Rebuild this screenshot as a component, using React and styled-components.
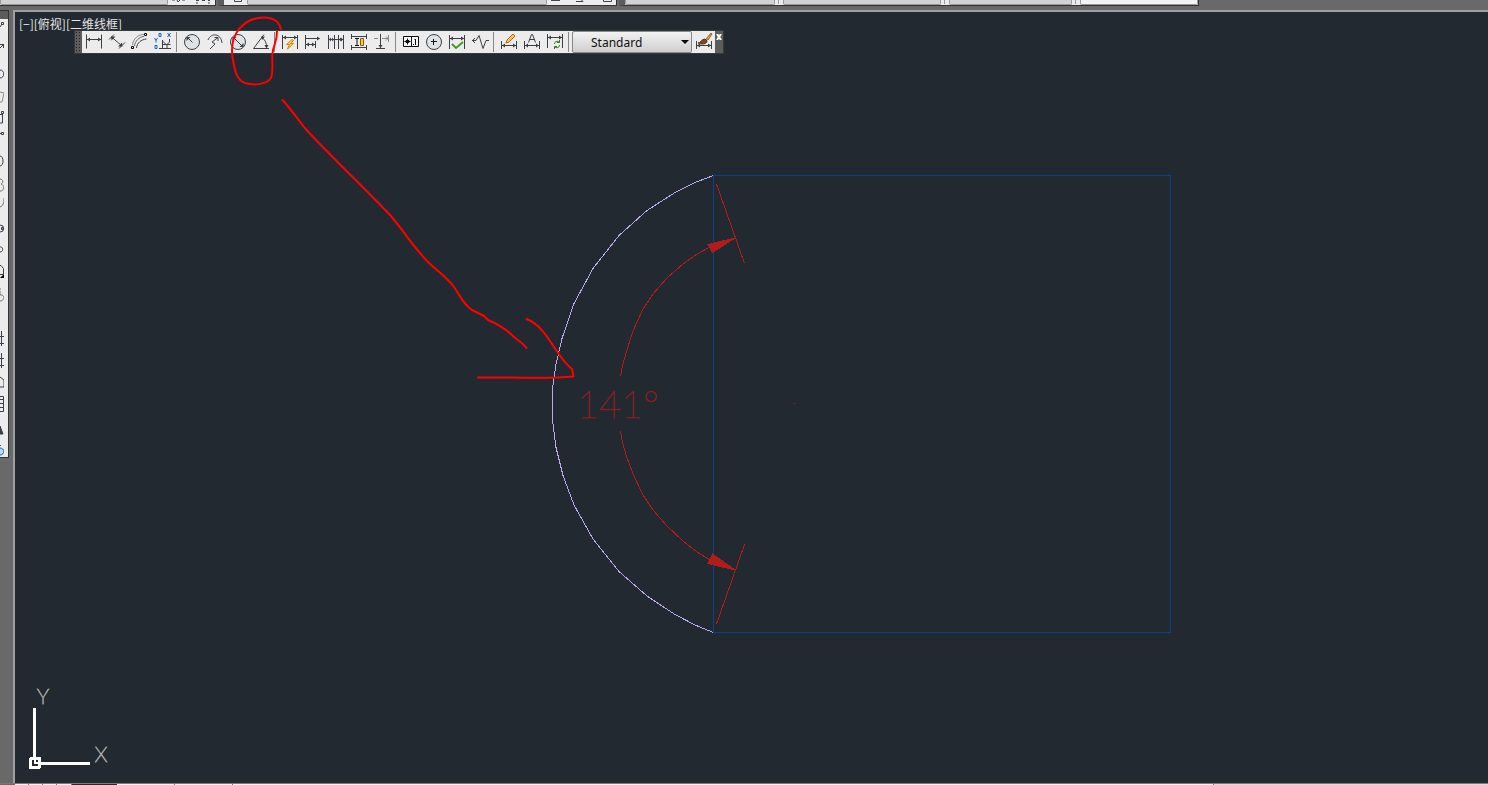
import styled, { createGlobalStyle } from "styled-components";

const ink = "#3c3f44";

const GlobalStyle = createGlobalStyle`
    * {
        box-sizing: border-box;
    }

    body {
        margin: 0;
        background-color: #696969;
        font-family: "Noto Sans CJK SC", "Noto Sans", sans-serif;
        overflow: hidden;
    }
`

const dimensionTools = [
    {
        group: "dimension",
        tools: [
            {
                label: "Linear",
                icon: (
                    <>
                        <path d="M1.500 1.500v14M16.500 1.500v14M2 6.500h14" />
                        <path d="M2 6.500l3-2v4zM16 6.500l-3-2v4z" fill={ink} stroke="none" />
                    </>
                )
            },
            {
                label: "Aligned",
                icon: (
                    <>
                        <path d="M1 6.500L6 1.500M11 15.500l6-6M3.500 4l10.500 9" />
                        <path d="M3 3.500h4.500L3.500 7.500zM14.500 13.500H10L14 9.500z" fill={ink} stroke="none" />
                    </>
                )
            },
            {
                label: "Arc length",
                icon: (
                    <>
                        <path d="M1.500 12C2 6 7 1.500 13 1.500" stroke="#888" />
                        <path d="M5.500 15C6 10 10 6.500 15.500 6" />
                        <path d="M3.500 13C4 8 8 4 13 3.500" stroke="#666" />
                        <path d="M.5 13.500h2v2h-2zM13.500.5h2v2h-2z" fill="#fff" stroke="#000" />
                    </>
                )
            },
            {
                label: "Ordinate",
                icon: (
                    <>
                        <path d="M8.500 7v9M5 15.500h12M9 11.500h4v4M8.500 8l3.500 3.500h4.500M15.500 6v3l-2.500 2.500" />
                        <path d="M5 .5h2v3H5zM1 12.500h2v3H1zM13.500 0l3 4M16.500 0l-3 4M.5 5L2 7.500M3.500 5L2 7.500v2" stroke="#1767b5" />
                    </>
                )
            }
        ]
    },
    {
        group: "radial",
        tools: [
            {
                label: "Radius",
                icon: (
                    <>
                        <circle cx="9" cy="9" r="7.500" fill="#dfe3e3" />
                        <path d="M9.500 9.500L5 5" />
                        <path d="M3.500 4h4l-4 4z" fill={ink} stroke="none" />
                    </>
                )
            },
            {
                label: "Jogged",
                icon: <path d="M2 7C5-.5 15 0 16 10M4 16l5-5-3-2 6-4.500M8.500 4.500H12V8" />
            },
            {
                label: "Diameter",
                icon: (
                    <>
                        <circle cx="9" cy="9" r="7.500" fill="#dfe3e3" />
                        <path d="M4 4l10 10" />
                        <path d="M3.500 4h4l-4 4zM14.500 14h-4l4-4z" fill={ink} stroke="none" />
                    </>
                )
            },
            {
                label: "Angular",
                icon: (
                    <>
                        <path d="M12 1.500L1.500 15.500H17M10 4.500c3 2 5 6 4.500 10" />
                        <path d="M9 3.500h4L10 7zM12.500 12h4l-2 3.500z" fill={ink} stroke="none" />
                    </>
                )
            }
        ]
    },
    {
        group: "placement",
        tools: [
            {
                label: "Quick dimension",
                icon: (
                    <>
                        <path d="M1.500 2v14M16.500 2v14M2 4.500h14" />
                        <path d="M2 4.500l3-2v4zM16 4.500l-3-2v4z" fill={ink} stroke="none" />
                        <path d="M11 6.500L5.500 11.500h3l-2 4.500 6-5.500h-3l3-3z" fill="#ffd34e" stroke="#e0800f" />
                    </>
                )
            },
            {
                label: "Baseline",
                icon: (
                    <>
                        <path d="M1.500 2v14M1.500 5.500h14M2 11.500h10M11.500 8v7" />
                        <path d="M16 5.500l-3-2v4zM2 11.500l3-2v4zM11 11.500l-3-2v4z" fill={ink} stroke="none" />
                    </>
                )
            },
            {
                label: "Continue",
                icon: (
                    <>
                        <path d="M1.500 2v14M7.500 2v14M11.500 2v14M16.500 2v14M2 6.500h14" />
                        <path d="M2 6.500l2-2v4zM7 6.500l-2-2v4zM12 6.500l2-2v4zM16 6.500l-2-2v4z" fill={ink} stroke="none" />
                    </>
                )
            },
            {
                label: "Dimension space",
                icon: (
                    <>
                        <path d="M1 3.500h16M1 14.500h16M1.500 1v5M16.500 1v5M1.500 12v5M16.500 12v5" />
                        <path d="M5 5.500h4M7 6v6M5 12.500h4" stroke="#111" />
                        <path d="M10.500 5.500h3v7h-3z" fill="#ffc928" stroke="#8c5a14" />
                    </>
                )
            },
            {
                label: "Dimension break",
                icon: (
                    <>
                        <path d="M1 5.500h4M9 5.500h7M15.500 2v7M13 3.500l2 2-2 2" stroke="#888" />
                        <path d="M7.500 1v14M3 15.500h9" />
                        <path d="M7.500 15l-2-3h4z" fill={ink} stroke="none" />
                    </>
                )
            }
        ]
    },
    {
        group: "marking",
        tools: [
            {
                label: "Tolerance",
                icon: (
                    <>
                        <path d="M1.500 3.500h15v10h-15zM9.500 3.500v10" fill="#fff" stroke="#111" />
                        <path d="M2.500 8.500h6M5.500 5.500v6M4 7.500h3v2H4zM13.500 6v6M12.500 6.500h1M11 11.500h1" stroke="#111" />
                    </>
                )
            },
            {
                label: "Center mark",
                icon: (
                    <>
                        <circle cx="9" cy="9" r="7.500" fill="#dfe3e3" />
                        <path d="M8.500 6v6M6 8.500h6" stroke="#111" />
                    </>
                )
            },
            {
                label: "Inspection",
                icon: (
                    <>
                        <path d="M1.500 2v14M16.500 2v14M2 5.500h14" />
                        <path d="M2 5.500l3-2v4zM16 5.500l-3-2v4z" fill={ink} stroke="none" />
                        <path d="M4 11l4 4 7-6" stroke="#38a020" strokeWidth="2" />
                    </>
                )
            },
            {
                label: "Jogged linear",
                icon: <path d="M1 7.500h4l3-5 4 13 3-8h3M4 5L1.500 7.500 4 10" />
            }
        ]
    },
    {
        group: "editing",
        tools: [
            {
                label: "Dimension edit",
                icon: (
                    <>
                        <path d="M1.500 8v8M16.500 8v8M2 12.500h14" />
                        <path d="M2 12.500l3-2v4zM16 12.500l-3-2v4z" fill={ink} stroke="none" />
                        <path d="M6 10l1-3 6-6 2 2-6 6z" fill="#ffc655" stroke="#b8651b" />
                    </>
                )
            },
            {
                label: "Dimension text edit",
                icon: (
                    <>
                        <path d="M1.500 8v8M16.500 8v8M2 12.500h14" />
                        <path d="M2 12.500l3-2v4zM16 12.500l-3-2v4z" fill={ink} stroke="none" />
                        <path d="M5.500 9.500l3-8h1l3 8M6.500 6.500h5" />
                    </>
                )
            },
            {
                label: "Dimension update",
                icon: (
                    <>
                        <path d="M1.500 1v14M16.500 1v14M2 4.500h14" />
                        <path d="M2 4.500l3-2v4zM16 4.500l-3-2v4z" fill={ink} stroke="none" />
                        <path d="M8.500 11c0-3 3-3 5-2M13.500 7v2.500H11M13.500 12c0 3-3 3-5 2M8.500 16v-2.500H11" stroke="#287a1c" />
                    </>
                )
            }
        ]
    }
]

// The docked draw palette is mostly off screen, only the right edge of each icon shows
const drawTools = [
    { label: "Line", height: 23, icon: <path d="M0 8l2-3M1.500 3.500h2v2h-2z" /> },
    { label: "Construction line", height: 20, icon: <path d="M0 6l4-4M0 2.500h3.500V6" /> },
    { label: "Polyline", height: 27, icon: <path d="M0 8c5 0 5 8 0 8" /> },
    { label: "Polygon", height: 20, icon: <path d="M0 3l4 1-2 9H0" stroke="#888" /> },
    { label: "Rectangle", height: 20, icon: <path d="M0 5.500h2M2.500 5v9H0M1.500 2.500h2v2h-2z" /> },
    { label: "Arc", height: 21, icon: <path d="M0 4.500h1M1.500 3.500h2v2h-2z" /> },
    { label: "Circle", height: 26, icon: <path d="M0 6c4 0 4 10 0 10" /> },
    { label: "Revision cloud", height: 19, icon: <path d="M0 3c3 0 4 4 1 5 4 1 3 8-1 7" stroke="#777" /> },
    { label: "Spline", height: 24, icon: <path d="M4 3c0 5-1 8-4 9" stroke="#777" /> },
    { label: "Ellipse", height: 21, icon: <path d="M0 6l3 1v5l-3 1M1.500 8.500h2v2h-2z" /> },
    { label: "Ellipse arc", height: 22, icon: <path d="M0 7c3-1 4 5 0 5" /> },
    {
        label: "Insert block",
        height: 24,
        icon: (
            <>
                <path d="M0 3.500h1l2.500 3v6H0" />
                <path d="M4 12v4H0z" fill="#000" stroke="none" />
            </>
        )
    },
    { label: "Make block", height: 45, icon: <path d="M0 5v4c5-1 5 6 0 6M0 3h1" stroke="#777" /> },
    { label: "Hatch", height: 22, icon: <path d="M1.500 0v15M0 5.500h4M0 12.500h4" /> },
    { label: "Gradient", height: 21, icon: <path d="M1.500 0v15M0 5.500h4M0 12.500h4" /> },
    { label: "Region", height: 22, icon: <path d="M0 3l4 3v7H0" /> },
    { label: "Table", height: 29, icon: <path d="M0 .5h3.500v15H0M0 3.500h3M0 7.500h3M0 11.500h3" /> },
    { label: "Multiline text", height: 20, icon: <path d="M0 1l3 8H0z" fill={ink} /> },
    { label: "Add selected", height: 12, icon: <path d="M0 3c5 0 5 7 0 7M0 .5h1" stroke="#1767b5" fill="#b8dcff" /> }
]

export default function App() {
    return (
        <>
            <GlobalStyle />
            <Window>
                <TopBar aria-label="Properties">
                    <Strip $width={216}>
                        <Combo $width={168} />
                        <Peek viewBox="0 0 44 5" width="44" height="5">
                            <path d="M4 0h3M9 0l1 2 2-2M14 0h3M28 .5h3M34 .5h3M40 .5h2M28 3h2M40 3h2" />
                        </Peek>
                    </Strip>
                    <Strip $width={399} $grip>
                        <Peek viewBox="0 0 23 5" width="23" height="5">
                            <path d="M10.500 0v1.500h7V0" />
                        </Peek>
                        <Combo $width={300} />
                        <Peek viewBox="0 0 68 5" width="68" height="5">
                            <path d="M4 .5h9M29 1.500h7l-2-2M56.500 0v1.500h8V0" />
                        </Peek>
                    </Strip>
                    <Strip $width={580} $grip>
                        <Combo $width={150} />
                        <Divider />
                        <Combo $width={158} />
                        <Divider />
                        <Combo $width={123} />
                        <Divider />
                        <Combo $light />
                    </Strip>
                </TopBar>
                <Workspace>
                    <DrawPalette aria-label="Draw">
                        <PaletteGrip />
                        {drawTools.map((tool) => (
                            <DrawButton key={tool.label} aria-label={tool.label} $height={tool.height}>
                                <Icon width="4" height="18" viewBox="0 0 4 18">{tool.icon}</Icon>
                            </DrawButton>
                        ))}
                    </DrawPalette>
                    <Viewport>
                        <ViewLabel>
                            <ViewButton>[−]</ViewButton>
                            <ViewButton>[俯视]</ViewButton>
                            <ViewButton>[二维线框]</ViewButton>
                        </ViewLabel>
                        <Drawing />
                        <DimensionBar />
                        <Markup />
                    </Viewport>
                </Workspace>
                <BottomBar>
                    <Tab $width={14} />
                    <Tab $width={14} />
                    <Tab $width={14} />
                    <Tab $width={15} />
                    <TabGap />
                    <Tab $width={58} />
                    <Tab $width={58} />
                    <Tab $grow />
                    <ScrollTrack />
                </BottomBar>
            </Window>
        </>
    )
}

const DimensionBar = () => (
    <FloatingBar role="toolbar" aria-label="Dimension">
        <Grip />
        {dimensionTools.map(({ group, tools }) => (
            <ToolGroup key={group}>
                {tools.map((tool) => (
                    <ToolButton key={tool.label} aria-label={tool.label}>
                        <Icon width="18" height="18" viewBox="0 0 18 18">{tool.icon}</Icon>
                    </ToolButton>
                ))}
            </ToolGroup>
        ))}
        <StyleField>
            <StyleSelect aria-label="Dimension style" defaultValue="Standard">
                <option>Standard</option>
            </StyleSelect>
            <Caret width="8" height="4" viewBox="0 0 8 4">
                <path d="M0 0h8L4 4z" />
            </Caret>
        </StyleField>
        <ToolButton aria-label="Dimension style manager">
            <Icon width="18" height="18" viewBox="0 0 18 18">
                <path d="M1.500 8v8M16.500 8v8M2 12.500h14" />
                <path d="M2 12.500l3-2v4zM16 12.500l-3-2v4z" fill={ink} stroke="none" />
                <path d="M3 10c3 0 3-4 7-4l2 2c0 3-5 4-9 2z" fill="#7a4a24" stroke="#5b3517" />
                <path d="M11 6l5-6 1 1-4 6z" fill="#d99a4a" stroke="#a06a2c" />
            </Icon>
        </ToolButton>
        <CloseButton aria-label="Close">
            <svg width="6" height="6" viewBox="0 0 6 6">
                <path d="M1 0l4 6M5 0L1 6" stroke="#fff" strokeWidth="2" />
            </svg>
        </CloseButton>
    </FloatingBar>
)

const Drawing = () => (
    <Sheet viewBox="15 12 1473 771" width="1473" height="771" shapeRendering="crispEdges">
        <path d="M713.500 175.500H1170.500V632.500H713.500z" stroke="#0b3f86" />
        <path
            d="M713.500 175.500L695 182.500 675 192.500 647 210.500 619 235.500 593 268.500 574 303.500 562 338.500 556 364.500 553 385 552.500 404 553 424 556 447.500 563 475.500 574 505 593 539 619 571.500 647 596 675 614.500 695 625 713.500 632.500"
            stroke="#bba7ee"
        />
        <g stroke="#b01b1b">
            <path d="M716.500 184L744.500 263.500M744.500 544.500L716.500 624" />
            <path d="M620.500 376.500L622 368 626 353 633 331 643 309 653 294 667 278 683 264 697 254 710 247 735 238" />
            <path d="M620.500 431.500L622 440 626 455 633 474 643 495 653 510 667 526 683 541 697 552 710 560 735 569.500" />
            <path d="M735 238L708 244.500 712.500 252.500zM735 570L712.500 554 708 563.500z" fill="#b01b1b" />
            <path d="M794 403.500h1" />
        </g>
        <DimensionText x="577" y="418">141°</DimensionText>
        <path d="M34.500 708V758M40 763.500H90" stroke="#fff" strokeWidth="3" />
        <rect x="29" y="757" width="12" height="12" rx="2" fill="#fff" />
        <rect x="32" y="760" width="6" height="6" fill="#222930" />
        <path d="M34 760v4h4v-2h-2v-2z" fill="#fff" />
        <AxisText x="43" y="704">Y</AxisText>
        <AxisText x="101" y="762">X</AxisText>
    </Sheet>
)

const Markup = () => (
    <MarkupLayer viewBox="15 12 1473 771" width="1473" height="771">
        <path d="M281 29C279 22 274 18 266 17.500 255 17 246 21 239 29 232 38 231 50 233 60 235 72 237 80 245 83 255 86 267 84 271 78 274 70 271 58 273 50 275 43 277 40 277 31" />
        <path d="M282.500 100C290 108 296 117 304 127C325 151 358 181 390 215C404 231 411 244 427 261C438 272 446 276 454 287C461 297 463 304 472 310L484 316L488 320C500 325 507 330 514 337C519 341 524 344 526.500 348" />
        <path d="M526.500 319C540 324 548 338 556 350C562 359 568 366 572 369L573.500 376.500C557 378 535 378 510 377.500H478" />
    </MarkupLayer>
)

const Window = styled.div`
    display: flex;
    flex-direction: column;
    height: 100vh;
    background-color: #696969;
`

const TopBar = styled.header`
    display: flex;
    gap: 2px;
    height: 10px;
`

const Strip = styled.div`
    display: flex;
    align-items: flex-start;
    width: ${({ $width }) => $width}px;
    height: 6px;
    background-color: #ececec;
    border-left: ${({ $grip }) => ($grip ? "6px solid #5c5c5c" : "none")};
    border-right: 1px solid #333;
    border-bottom: 1px solid #333;
    overflow: hidden;
`

const Combo = styled.div`
    flex: ${({ $width }) => ($width ? `0 0 ${$width}px` : "1")};
    height: 5px;
    background-color: ${({ $light }) => ($light ? "#f4f4f2" : "#d2d2d2")};
    border: 1px solid #999;
    border-top: none;
    border-radius: 0 0 2px 2px;
`

const Divider = styled.div`
    width: 1px;
    height: 4px;
    margin: 0 4px 0 3px;
    background-color: #999;
`

const Peek = styled.svg`
    flex-shrink: 0;
    fill: none;
    stroke: #444;
`

const Workspace = styled.div`
    display: flex;
    flex: 1;
    min-height: 0;
`

const DrawPalette = styled.nav`
    display: flex;
    flex-direction: column;
    align-self: flex-start;
    width: 9px;
    background-color: #ececec;
    border: 1px solid #333;
    border-left: none;
`

const PaletteGrip = styled.div`
    height: 8px;
    background-color: #5c5c5c;
`

const DrawButton = styled.button`
    display: flex;
    align-items: flex-start;
    height: ${({ $height }) => $height}px;
    padding: 0;
    border: none;
    background: none;
`

const Icon = styled.svg`
    display: block;
    flex-shrink: 0;
    fill: none;
    stroke: ${ink};
`

const Viewport = styled.main`
    position: relative;
    flex: 1;
    margin-left: 4px;
    border-left: 2px solid #a0a0a0;
    border-top: 2px solid #a0a0a0;
    background-color: #222930;
    overflow: hidden;
`

const ViewLabel = styled.div`
    position: absolute;
    top: 3px;
    left: 4px;
    display: flex;
`

const ViewButton = styled.button`
    padding: 0;
    border: none;
    background: none;
    color: #e6e6e6;
    font-family: "Noto Sans CJK SC", sans-serif;
    font-size: 12px;
    line-height: 18px;
`

const Sheet = styled.svg`
    display: block;
    fill: none;
`

const MarkupLayer = styled.svg`
    position: absolute;
    top: 0;
    left: 0;
    fill: none;
    stroke: #f00;
    stroke-width: 2;
    stroke-linecap: round;
    stroke-linejoin: round;
    pointer-events: none;
`

const DimensionText = styled.text`
    fill: #b01b1b;
    stroke: #b01b1b;
    stroke-opacity: 0.5;
    font-family: Lato, sans-serif;
    font-size: 38px;
    font-weight: 100;
`

const AxisText = styled.text`
    fill: #fff;
    stroke: #fff;
    stroke-opacity: 0.5;
    font-family: Lato, sans-serif;
    font-size: 21px;
    font-weight: 100;
    text-anchor: middle;
`

const FloatingBar = styled.div`
    position: absolute;
    top: 19px;
    left: 60px;
    display: flex;
    align-items: center;
    height: 22px;
    background-color: #ececec;
    outline: 1px solid #333a40;
`

const Grip = styled.div`
    width: 7px;
    height: 22px;
    background-color: #5c5c5c;
    background-image: radial-gradient(#222 1px, transparent 1px);
    background-size: 3px 3px;
`

const ToolGroup = styled.div`
    display: flex;
    padding-right: 2px;
    margin-right: 3px;
    border-right: 1px solid #888;
`

const ToolButton = styled.button`
    display: flex;
    align-items: center;
    justify-content: center;
    width: 23px;
    height: 20px;
    padding: 0;
    border: none;
    background: none;
`

const StyleField = styled.div`
    position: relative;
    display: flex;
`

const StyleSelect = styled.select`
    appearance: none;
    width: 120px;
    height: 22px;
    padding: 0 18px;
    border: 1px solid #888;
    border-radius: 2px;
    background: linear-gradient(#f2f2f2, #cfcfcf);
    color: #111;
    font-family: "Noto Sans", sans-serif;
    font-size: 12px;
`

const Caret = styled.svg`
    position: absolute;
    top: 9px;
    right: 3px;
    pointer-events: none;
`

const CloseButton = styled.button`
    display: flex;
    align-items: flex-start;
    justify-content: center;
    width: 8px;
    height: 22px;
    padding: 3px 0;
    border: none;
    background-color: #5c5c5c;
`

const BottomBar = styled.footer`
    display: flex;
    height: 2px;
    padding-left: 15px;
    border-top: 1px solid #777;
    background-color: #696969;
`

const Tab = styled.div`
    flex: ${({ $width, $grow }) => ($grow ? "1" : `0 0 ${$width}px`)};
    background-color: #f4f4f4;
    border-right: 1px solid #777;
`

const TabGap = styled.div`
    width: 45px;
    background-color: #222930;
`

const ScrollTrack = styled.div`
    width: 274px;
    background-color: #ddd;
`
